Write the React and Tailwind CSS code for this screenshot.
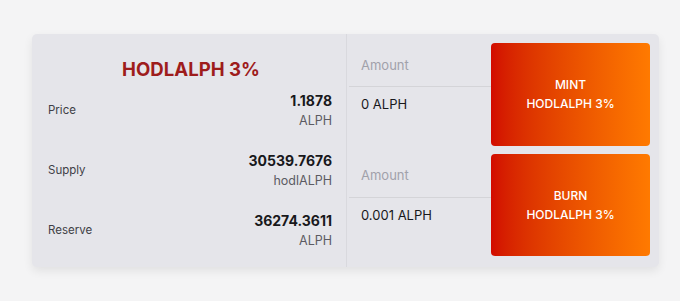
import React from 'react';

const stats = [
    { label: 'Price', value: '1.1878', unit: 'ALPH' },
    { label: 'Supply', value: '30539.7676', unit: 'hodlALPH' },
    { label: 'Reserve', value: '36274.3611', unit: 'ALPH' },
];

const actions = [
    { amount: '0 ALPH', verb: 'MINT' },
    { amount: '0.001 ALPH', verb: 'BURN' },
];

const App = () => {
    return (
        <div className="h-[301px] w-full bg-[#f4f4f5] pt-[34px] pl-[32px] font-['Inter',sans-serif]">
            <div className="flex h-[233px] w-[627px] rounded-[5px] bg-[#e5e5ea] shadow-[0_4px_10px_rgba(0,0,0,0.08)]">
                {/* token info */}
                <div className="w-[315px] border-r border-[#d9d9de] pt-[23px]">
                    <h1 className="pl-[4px] text-center text-[18.6px] leading-[24px] font-bold text-[#9e1c1c]">
                        HODLALPH 3%
                    </h1>
                    {stats.map(s => (
                        <div key={s.label} className="flex h-[60px] items-center justify-between pl-[16px] pr-[14px]">
                            <span className="text-[11.5px] text-[#3f3f46]">{s.label}</span>
                            <div className="text-right">
                                <div className="text-[14px] leading-[20px] font-bold text-[#18181b]">{s.value}</div>
                                <div className="text-[12.5px] leading-[20px] text-[#5b5b63]">{s.unit}</div>
                            </div>
                        </div>
                    ))}
                </div>

                {/* mint / burn */}
                <div className="flex flex-1 flex-col gap-[8px] pt-[9px] pr-[9px] pb-[11px] pl-[2px]">
                    {actions.map(a => (
                        <div key={a.verb} className="flex h-[103px]">
                            <div className="w-[142px]">
                                <div className="flex h-[44px] items-center border-b border-[#d4d4d8] pt-[2px] pl-[12px] text-[13px] text-[#a1a1aa]">
                                    Amount
                                </div>
                                <div className="flex h-[36px] items-center pl-[12px] text-[13px] text-[#18181b]">
                                    {a.amount}
                                </div>
                            </div>
                            <button className="flex flex-1 flex-col items-center justify-center rounded-[4px] bg-gradient-to-r from-[#d20a00] to-[#ff7a00] text-[12px] leading-[19px] font-medium text-white">
                                <span>{a.verb}</span>
                                <span>HODLALPH 3%</span>
                            </button>
                        </div>
                    ))}
                </div>
            </div>
        </div>
    );
};

export default App;
